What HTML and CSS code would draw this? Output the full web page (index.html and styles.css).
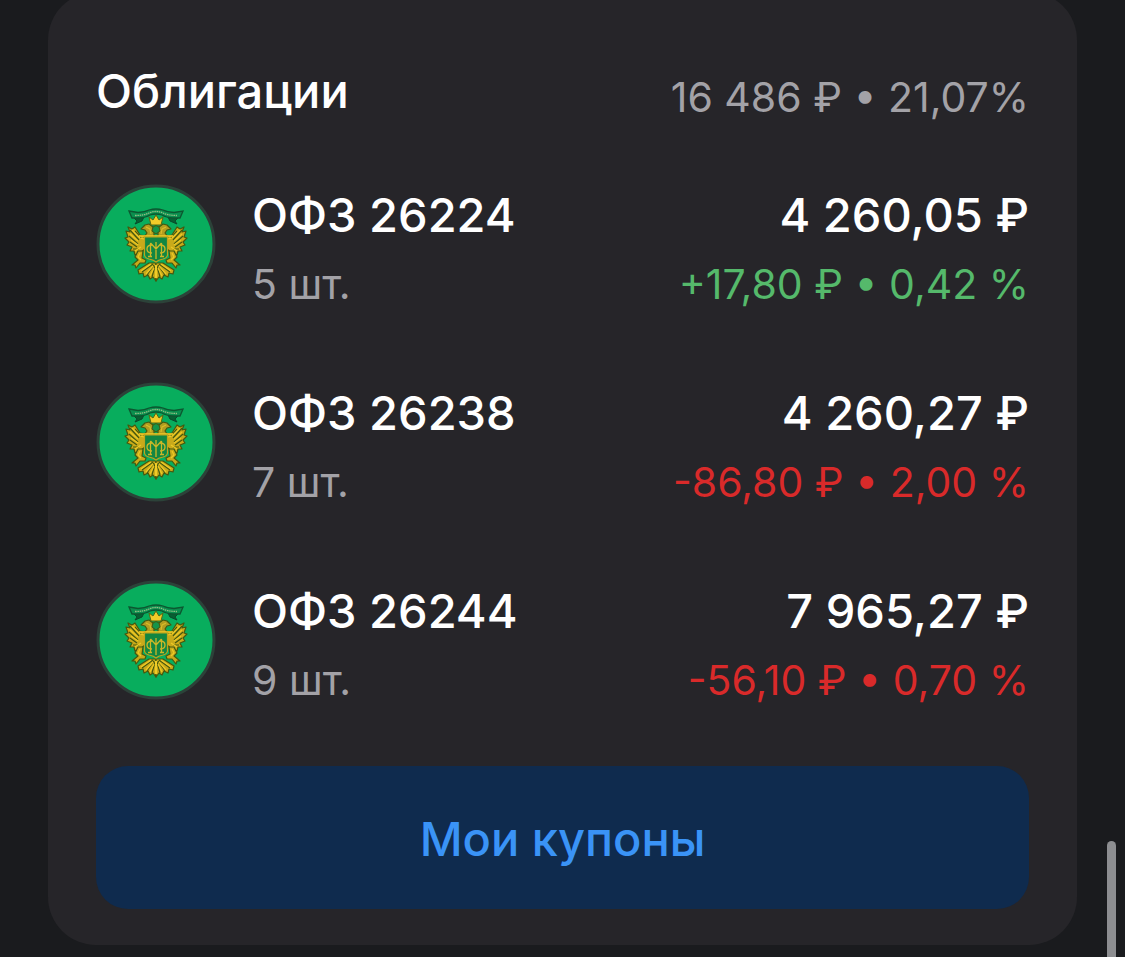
FILE: index.html
```html
<!DOCTYPE html>
<html lang="ru">
<head>
  <meta charset="UTF-8">
  <meta name="viewport" content="width=device-width, initial-scale=1">
  <title>Облигации</title>
  <link rel="stylesheet" href="styles.css">
</head>
<body>
  <!-- Герб, общий для всех ОФЗ -->
  <svg class="sprite" aria-hidden="true">
    <symbol id="emblem" viewBox="0 0 120 120">
      <circle cx="60" cy="60" r="58" fill="#08ad5d" stroke="#2c4239" stroke-width="3"/>
      <g id="half" stroke="#44580f" stroke-width="1.2" stroke-linejoin="round">
        <!-- крыло -->
        <path fill="#c9aa1a" d="M50 52 L44 51 L39 43 L36 45 L32 43 L34 48 L30 47 L32 53 L29 54 L33 58 L31 61 L36 63 L34 67 L38 67 L39 71 L44 69 L49 65 Z"/>
        <path fill="none" d="M34 46 L43 56 M33 52 L42 60 M34 58 L41 63 M37 65 L43 65 M39 47 L45 54"/>
        <path fill="none" stroke="#edc926" d="M36 46 L44 54 L48 55 M34 50 L42 57 M35 56 L42 61 M39 67 L45 63"/>
        <!-- голова -->
        <path fill="#b39d20" d="M58 53 L48 53 L51 49 L49 46 L45 45 L49 41 L53 40 L57 43 L58 47 Z"/>
        <path fill="none" stroke="#efc925" stroke-width="1.6" d="M43 52 H60"/>
        <path fill="none" stroke="#dcbc28" d="M50 43 L54 45 L55 50"/>
        <!-- лапа -->
        <path fill="#c9aa1a" d="M47 67 L42 67 L39 73 L42 76 L36 81 L39 81 L40 84 L44 79 L49 79 L50 76 L46 74 Z"/>
        <path fill="none" stroke="#edc926" d="M44 69 L42 73 L45 76"/>
        <!-- хвост -->
        <path fill="#c9aa1a" d="M60 79 L53 79 L42 86 L43 90 L47 89 L48 93 L52 91 L54 95 L57 93 L60 97 Z"/>
        <path fill="none" d="M57 80 L46 88 M58 81 L51 91 M59 82 L56 93"/>
        <path fill="none" stroke="#edc926" d="M55 80 L45 87 M57 82 L50 90 M58 84 L54 92"/>
      </g>
      <use href="#half" transform="matrix(-1 0 0 1 120 0)"/>
      <!-- щит -->
      <path fill="#128642" stroke="#bfa41d" stroke-width="1.2" d="M48.500 53 H71.500 V71 Q71 74 67 75 Q62 76 60 78 Q58 76 53 75 Q49 74 48.500 71 Z"/>
      <g fill="none" stroke="#cdb727" stroke-width="1.300">
        <path d="M60 58 V75 M54.500 59 V72 M65.500 59 V72 M52 72.500 H56 M64 72.500 H68 M54.500 59 L60 65 L65.500 59"/>
        <path d="M56 61 Q51 61 51 65 Q51 69 56 69 M64 61 Q69 61 69 65 Q69 69 64 69"/>
      </g>
      <!-- корона -->
      <path fill="#f2cc29" stroke="#586611" d="M55 41 L53 33 L57 36 L60 31 L63 36 L67 33 L65 41 Z"/>
      <path fill="#159449" stroke="#44580f" d="M57 43 Q60 40 63 43 L64 47 L60 50 L56 47 Z"/>
      <path d="M60 94 V81" stroke="#f0cc28" stroke-width="2"/>
      <!-- лента -->
      <path fill="#075f32" stroke="#0a4a2a" d="M37 33 L48 33 L46 37 L39 40 L41 37 Z M83 33 L72 33 L74 37 L81 40 L79 37 Z"/>
      <path fill="#0a8f4e" stroke="#0c5730" stroke-width="1.3" d="M33 27 L42 28.500 Q49 28 53 26 Q60 24 67 26 Q71 28 78 28.500 L87 27 L84 34 L77 34 Q70 33.500 66 31 Q60 29 54 31 Q50 33.500 43 34 L36 34 Z"/>
      <path fill="none" stroke="#93bd83" stroke-width="1.300" stroke-dasharray="1.500 .7" d="M39 31.500 Q48 31.500 53 29 Q60 26 67 29 Q72 31.500 81 31.500"/>
    </symbol>
  </svg>

  <main class="card">
    <header class="card-header">
      <h1 class="card-title">Облигации</h1>
      <p class="card-total">16 486 ₽ • 21,07%</p>
    </header>

    <ul class="bonds">
      <li class="bond">
        <svg class="bond-icon" aria-hidden="true"><use href="#emblem"/></svg>
        <div class="bond-info">
          <h2 class="primary">ОФЗ 26224</h2>
          <p class="secondary">5 шт.</p>
        </div>
        <div class="bond-value">
          <p class="primary">4 260,05 ₽</p>
          <p class="secondary up">+17,80 ₽ • 0,42 %</p>
        </div>
      </li>
      <li class="bond">
        <svg class="bond-icon" aria-hidden="true"><use href="#emblem"/></svg>
        <div class="bond-info">
          <h2 class="primary">ОФЗ 26238</h2>
          <p class="secondary">7 шт.</p>
        </div>
        <div class="bond-value">
          <p class="primary">4 260,27 ₽</p>
          <p class="secondary down">-86,80 ₽ • 2,00 %</p>
        </div>
      </li>
      <li class="bond">
        <svg class="bond-icon" aria-hidden="true"><use href="#emblem"/></svg>
        <div class="bond-info">
          <h2 class="primary">ОФЗ 26244</h2>
          <p class="secondary">9 шт.</p>
        </div>
        <div class="bond-value">
          <p class="primary">7 965,27 ₽</p>
          <p class="secondary down">-56,10 ₽ • 0,70 %</p>
        </div>
      </li>
    </ul>

    <button class="coupons" type="button">Мои купоны</button>
  </main>

  <div class="scroll-thumb"></div>
</body>
</html>
```

FILE: styles.css
```css
* {
  box-sizing: border-box;
}

body {
  margin: 0;
  background: #1a1b1e;
  color: #fff;
  font-family: Inter, "Liberation Sans", sans-serif;
}

h1, h2, p, ul {
  margin: 0;
  padding: 0;
}

.sprite {
  position: absolute;
  width: 0;
  height: 0;
}

.card {
  margin: -8px 48px 0;
  padding: 68px 48px 36px;
  background: #262529;
  border-radius: 48px;
}

.card-header {
  display: flex;
  justify-content: space-between;
  align-items: flex-end;
  margin-bottom: 62px;
}

.card-title,
.primary {
  font-size: 47px;
  font-weight: 500;
  line-height: 62px;
}

.card-total,
.secondary {
  font-size: 41px;
  line-height: 50px;
  color: #a3a2a7;
}

.bonds {
  display: flex;
  flex-direction: column;
  gap: 73px;
  margin-bottom: 61px;
  list-style: none;
}

.bond {
  display: flex;
  align-items: flex-start;
  gap: 36px;
}

.bond-icon {
  flex: none;
  width: 120px;
  height: 120px;
}

.bond-info,
.bond-value {
  display: flex;
  flex-direction: column;
  gap: 13px;
}

.bond-value {
  margin-left: auto;
  text-align: right;
}

.up {
  color: #55b96b;
}

.down {
  color: #d92a2a;
}

.coupons {
  display: block;
  width: 100%;
  height: 143px;
  padding: 2px 0 0;
  border: 0;
  border-radius: 32px;
  background: #0f2b4e;
  color: #3a93f6;
  font: 500 47px/62px Inter, "Liberation Sans", sans-serif;
  cursor: pointer;
}

.scroll-thumb {
  position: fixed;
  right: 9px;
  bottom: 0;
  width: 9px;
  height: 116px;
  border-radius: 5px 5px 0 0;
  background: #8d8e91;
}
```
